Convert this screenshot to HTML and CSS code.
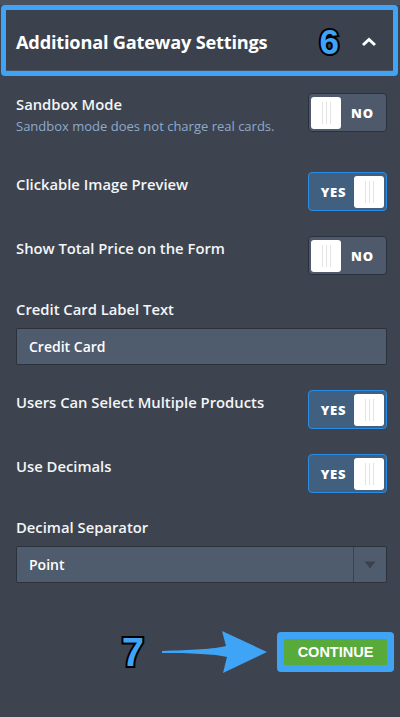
FILE: index.html
```html
<!DOCTYPE html>
<html>
<head>
<meta charset="utf-8">
<link rel="stylesheet" href="styles.css">
</head>
<body>
<div class="topstrip"></div>
<div class="header">
  <div class="header-inner">
    <span class="title">Additional Gateway Settings</span>
    <span class="step step6">6</span>
    <svg class="chev" width="16" height="10" viewBox="0 0 16 10"><path d="M2 8 L8 2.5 L14 8" fill="none" stroke="#fff" stroke-width="3"/></svg>
  </div>
</div>
<div class="panel">
  <div class="row tall">
    <div class="label-block">
      <div class="label">Sandbox Mode</div>
      <div class="desc">Sandbox mode does not charge real cards.</div>
    </div>
    <div class="toggle off"><span class="knob"><i></i><i></i><i></i></span><span class="ttext">NO</span></div>
  </div>
  <div class="row">
    <div class="label">Clickable Image Preview</div>
    <div class="toggle on"><span class="ttext">YES</span><span class="knob"><i></i><i></i><i></i></span></div>
  </div>
  <div class="row">
    <div class="label">Show Total Price on the Form</div>
    <div class="toggle off"><span class="knob"><i></i><i></i><i></i></span><span class="ttext">NO</span></div>
  </div>
  <div class="field">
    <div class="flabel">Credit Card Label Text</div>
    <div class="input">Credit Card</div>
  </div>
  <div class="row">
    <div class="label">Users Can Select Multiple Products</div>
    <div class="toggle on"><span class="ttext">YES</span><span class="knob"><i></i><i></i><i></i></span></div>
  </div>
  <div class="row">
    <div class="label">Use Decimals</div>
    <div class="toggle on"><span class="ttext">YES</span><span class="knob"><i></i><i></i><i></i></span></div>
  </div>
  <div class="field">
    <div class="flabel">Decimal Separator</div>
    <div class="select"><span class="sval">Point</span><span class="sarrow"><svg width="12" height="8" viewBox="0 0 12 8"><path d="M0.5 0.5 H11.5 L6 7.5 Z" fill="#3b424e"/></svg></span></div>
  </div>
  <div class="actions">
    <span class="step step7">7</span>
    <svg class="arrow" width="110" height="48" viewBox="0 0 110 48"><path d="M2 23 C30 22 55 21 66 18 L62 3 L107 24 L63 45 L67 29 C55 26 30 25 2 25 Z" fill="#3fa4f5"/></svg>
    <div class="btn-hl"><div class="btn">CONTINUE</div></div>
  </div>
</div>
</body>
</html>
```
FILE: styles.css
```css
html, body {
  margin: 0;
  padding: 0;
}
body {
  width: 400px;
  height: 717px;
  background: #3d4450;
  font-family: "Open Sans", "Liberation Sans", sans-serif;
  color: #f4f5f7;
  overflow: hidden;
}
.topstrip {
  height: 5px;
  background: #4a5260;
}
.header {
  margin: 0 2px 0 1px;
  border: 5px solid #3fa4f5;
  border-radius: 4px;
  background: #3b424d;
}
.header-inner {
  height: 57px;
  display: flex;
  align-items: center;
  padding: 3px 0 0 10px;
  border-bottom: 1px solid #4c5462;
}
.title {
  font-size: 18.2px;
  font-weight: 700;
  letter-spacing: -0.2px;
  color: #fff;
  flex: 1;
}
.step {
  font-family: "Liberation Sans", Arial, sans-serif;
  font-weight: 700;
  color: #3fa4f5;
  -webkit-text-stroke: 4px #000;
  paint-order: stroke fill;
}
.step6 {
  font-size: 35px;
  margin-right: 22px;
}
.chev {
  margin-right: 16px;
}
.panel {
  padding: 17px 13px 0 16px;
}
.row {
  display: flex;
  justify-content: space-between;
  align-items: flex-start;
  margin-bottom: 25px;
}
.row.tall {
  margin-bottom: 38px;
}
.label-block {
  padding-top: 2px;
}
.label {
  font-size: 14.8px;
  font-weight: 600;
  line-height: 18px;
  padding-top: 3px;
}
.label-block .label {
  padding-top: 0;
}
.desc {
  font-size: 13px;
  color: #8eaacb;
  line-height: 16px;
  margin-top: 5px;
}
.toggle {
  width: 73px;
  height: 37px;
  border-radius: 4px;
  display: flex;
  align-items: center;
  padding: 0 2px;
  box-sizing: content-box;
  flex-shrink: 0;
}
.toggle.off {
  background: #4e5a6b;
  border: 1px solid #2b313b;
  justify-content: flex-start;
}
.toggle.on {
  background: #41607f;
  border: 1px solid #2a8de3;
  justify-content: flex-end;
}
.knob {
  width: 30px;
  height: 32px;
  background: #fff;
  border-radius: 3px;
  display: flex;
  justify-content: center;
  gap: 3px;
  padding-top: 5px;
  box-sizing: border-box;
}
.knob i {
  display: block;
  width: 1px;
  height: 22px;
  background: #e2e3e5;
}
.ttext {
  flex: 1;
  text-align: center;
  font-size: 13px;
  font-weight: 800;
  letter-spacing: 0.8px;
  color: #fff;
}
.toggle.on .ttext {
  padding-left: 2px;
}
.field {
  margin-bottom: 25px;
}
.flabel {
  font-size: 14.8px;
  font-weight: 600;
  line-height: 18px;
}
.input, .select {
  margin-top: 10px;
  height: 35px;
  background: #4f5c6e;
  border: 1px solid #2c323c;
  border-radius: 2px;
  font-size: 14px;
  font-weight: 600;
  color: #fff;
  display: flex;
  align-items: center;
}
.input {
  padding-left: 12px;
}
.sval {
  flex: 1;
  padding-left: 12px;
}
.sarrow {
  width: 32px;
  height: 100%;
  border-left: 1px solid #3b424d;
  display: flex;
  align-items: center;
  justify-content: center;
}
.actions {
  display: flex;
  align-items: center;
  justify-content: flex-end;
  margin-top: 45px;
  margin-right: -7px;
}
.step7 {
  font-size: 40px;
  margin-right: 16px;
  line-height: 40px;
}
.arrow {
  margin-right: 7px;
}
.btn-hl {
  background: #3fa4f5;
  border-radius: 4px;
  padding: 7px;
}
.btn {
  width: 103px;
  height: 26px;
  background: #58ab3a;
  color: #fff;
  font-family: "Liberation Sans", Arial, sans-serif;
  font-size: 14.5px;
  font-weight: 700;
  display: flex;
  align-items: center;
  justify-content: center;
}
```
